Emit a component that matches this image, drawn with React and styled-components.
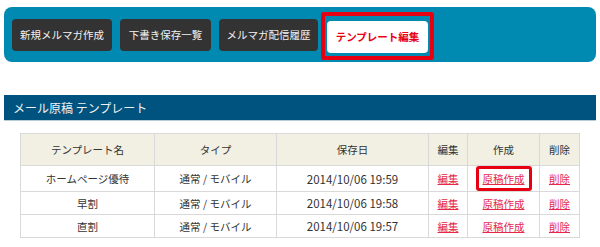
import styled, { createGlobalStyle } from "styled-components";

const GlobalStyle = createGlobalStyle`
    body {
        margin: 0;
        background: #ffffff;
        font-family: "Noto Sans CJK JP", "Noto Sans", sans-serif;
        color: #333333;
    }
`;

const navItems = [
    { label: '新規メルマガ作成', width: 100 },
    { label: '下書き保存一覧', width: 91 },
    { label: 'メルマガ配信履歴', width: 99 },
];

const rows = [
    { name: 'ホームページ優待', date: '2014/10/06 19:59', marked: true },
    { name: '早割', date: '2014/10/06 19:58' },
    { name: '直割', date: '2014/10/06 19:57' },
];

const App = () => {
    return (
        <Page>
            <GlobalStyle />
            <Nav>
                {navItems.map((item) => (
                    <NavButton key={item.label} $w={item.width}>
                        {item.label}
                    </NavButton>
                ))}
                <Highlight>
                    <NavButton $active $w={101}>テンプレート編集</NavButton>
                </Highlight>
            </Nav>

            <SectionTitle>メール原稿 テンプレート</SectionTitle>

            <Table>
                <colgroup>
                    <col style={{ width: 134 }} />
                    <col style={{ width: 122 }} />
                    <col style={{ width: 152 }} />
                    <col style={{ width: 39 }} />
                    <col style={{ width: 72 }} />
                    <col style={{ width: 40 }} />
                </colgroup>
                <thead>
                    <tr>
                        <Th>テンプレート名</Th>
                        <Th>タイプ</Th>
                        <Th>保存日</Th>
                        <Th>編集</Th>
                        <Th>作成</Th>
                        <Th>削除</Th>
                    </tr>
                </thead>
                <tbody>
                    {rows.map((row) => (
                        <tr key={row.name}>
                            <Td>{row.name}</Td>
                            <Td>通常 / モバイル</Td>
                            <Td $size="11.5px">{row.date}</Td>
                            <Td><Link href="#">編集</Link></Td>
                            <Td>
                                {row.marked
                                    ? <Marked><Link href="#">原稿作成</Link></Marked>
                                    : <Link href="#">原稿作成</Link>}
                            </Td>
                            <Td><Link href="#">削除</Link></Td>
                        </tr>
                    ))}
                </tbody>
            </Table>
        </Page>
    )
}

export default App;

const Page = styled.div`
    width: 600px;
    height: 247px;
    padding-top: 7px;
    box-sizing: border-box;
    overflow: hidden;
`;

const Nav = styled.div`
    display: flex;
    align-items: center;
    gap: 8px;
    height: 55px;
    margin: 0 4px;
    padding: 0 8px;
    box-sizing: border-box;
    background-color: #008ab2;
    border-radius: 8px;
`;

const NavButton = styled.div`
    display: flex;
    align-items: center;
    justify-content: center;
    width: ${(p) => p.$w}px;
    height: 32px;
    box-sizing: border-box;
    border-radius: 4px;
    font-size: 10.5px;
    white-space: nowrap;
    background-color: ${(p) => (p.$active ? '#ffffff' : '#333333')};
    color: ${(p) => (p.$active ? '#e60012' : '#f2f2f2')};
    font-weight: ${(p) => (p.$active ? 'bold' : 'normal')};
`;

const Highlight = styled.div`
    display: flex;
    margin-left: -5px;
    padding: 5px 2px 3px;
    border: 4px solid #e60012;
    border-radius: 3px;
    margin-top: 2px;
`;

const SectionTitle = styled.div`
    display: flex;
    align-items: center;
    height: 25px;
    margin: 33px 4px 0;
    padding-left: 9px;
    background-color: #00527f;
    border-bottom: 1px solid #b9cdd9;
    color: #eef2f5;
    font-size: 12px;
`;

const Table = styled.table`
    margin: 12px 0 0 20px;
    width: 559px;
    table-layout: fixed;
    border-collapse: collapse;
    font-size: 10.5px;
    color: #333333;
`;

const Th = styled.th`
    height: 31px;
    padding: 0;
    font-weight: normal;
    text-align: center;
    background-color: #f2f0e3;
    border: 1px solid #d9d9d9;
`;

const Td = styled.td`
    height: 22px;
    padding: 0;
    text-align: center;
    border: 1px solid #d9d9d9;
    white-space: nowrap;
    font-size: ${(p) => p.$size || '10.5px'};
`;

const Link = styled.a`
    color: #e5284a;
    text-decoration: underline;
`;

const Marked = styled.span`
    display: inline-block;
    padding: 3px 4px;
    border: 3px solid #e60012;
    border-radius: 3px;
    line-height: 13px;
`;
